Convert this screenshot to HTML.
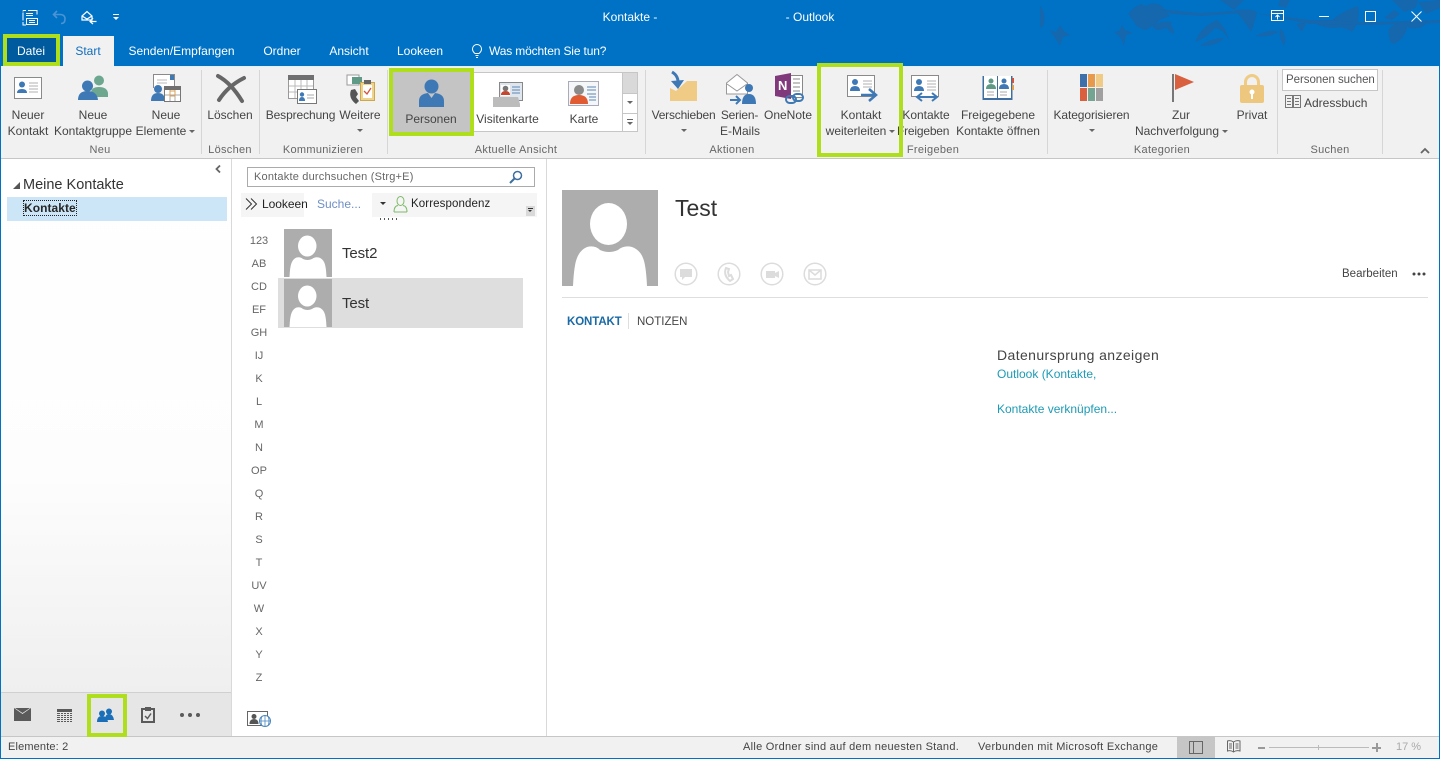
<!DOCTYPE html>
<html lang="de"><head><meta charset="utf-8"><title>Kontakte - Outlook</title>
<style>
html,body{margin:0;padding:0;width:1440px;height:759px;overflow:hidden;background:#fff}
body{position:relative;font-family:"Liberation Sans",sans-serif;font-size:12px;color:#444}
.a{position:absolute}
.t{position:absolute;white-space:nowrap;line-height:16px;font-size:12px;color:#444}
.c{transform:translateX(-50%)}
.g{position:absolute;box-sizing:border-box;border:4px solid #aede1c;z-index:5}
.s{position:absolute;width:1px;background:#d6d6d6}
.w{color:#fff}
.l{font-size:11px;color:#666;left:259px;transform:translateX(-50%);letter-spacing:0}
.m{color:#666;letter-spacing:.3px}
svg{position:absolute;overflow:visible}
</style></head><body>

<!-- title bar -->
<div class="a" style="left:0;top:0;width:1440px;height:66px;background:#0072c6"></div>
<svg style="left:1040px;top:0" width="400" height="66" fill="#1567ae">
<path d="M0 6q7 8 3 20L0 28zM10 30l6 2 4-7 4 6 6 4-7 2-3 9-5-8-3-4z"/>
<path d="M74 32l5-1 3-6 3 5 8 3-7 2-2 11-4-9z"/>
<path d="M88 14q6-8 14-10l4 2q10-6 18 2l6 8-10 4q-4 4-14 10-10-2-12-8zM112 26q10-6 20-4-4 8-16 8zM128 22q6 4 6 12-6-2-8-8z"/>
<path d="M120 9l40 4 50-3 6 2-54 4-30-2z"/>
<path d="M155 42q6-16 22-22 10 8 12 22-4-12-14-14-8 10-20 14zM195 10q16-2 22 2-2 10-6 20-6-10-16-22z"/>
<path d="M160 46q10-8 24-8-6 8-24 8zM240 28q8 8 4 18-6-8-4-18zM215 36q16-8 24-4-10 6-24 4zM256 24q8-2 10 0l-4 8z"/>
<path d="M270 20h22q12-10 26-14 2 12-2 20l-4 6q-8-6-18-4-14 0-24-8z"/>
<path d="M215 13l55 7 60 2 70-2v3l-70 2-60-1z"/>
<path d="M348 30q8-10 20-6-2 14-14 20l-4-2zM365 22q10-4 22 0-4 8-18 6zM352 0h26l-2 8-12 4zM378 2l22-2v8l-14 6zM180 0h24l-10 10zM240 0h10l-4 8-8-2zM344 18l10-8 6 4-8 6z"/>
</svg>

<!-- qat -->
<svg style="left:22px;top:10px" width="17" height="16" fill="none" stroke="#fff" stroke-width="1">
<path d="M1 .5h3M6 .5h9v4M1 2.500v8M1 .5v1M4 3.500h7M4 5.500h7M4.500 8.500h11v6h-11zM7 10.500h6M7 12.500h6M1 12v3h3"/></svg>
<svg style="left:52px;top:10px" width="15" height="14" fill="none" stroke="#4b93d3" stroke-width="1.600">
<path d="M5 1L1.500 4.500 5 8M2 4.500h6q5 0 5 4.500t-4 4.500"/></svg>
<svg style="left:81px;top:10px" width="16" height="16" fill="none" stroke="#fff" stroke-width="1.200">
<path d="M1 6l5-4.500L11 6v4H1zM1 6l5 3 5-3M12 8l-3 3.500 3 2.500M9.500 11.500h6" /></svg>
<div class="a" style="left:113px;top:14px;width:6px;height:1px;background:#fff"></div>
<div class="a" style="left:113px;top:17px;width:0;height:0;border-left:3px solid transparent;border-right:3px solid transparent;border-top:3px solid #fff"></div>

<div class="t w c" style="left:630px;top:9px">Kontakte -</div>
<div class="t w c" style="left:810px;top:9px">- Outlook</div>

<!-- window buttons -->
<svg style="left:1271px;top:10px" width="14" height="12" fill="none" stroke="#fff" stroke-width="1"><path d="M.5.500h12v10H.5zM.5 3.500h12M6.500 9.500v-4M4.500 7l2-2 2 2"/></svg>
<div class="a" style="left:1319px;top:16px;width:10px;height:1px;background:#fff"></div>
<div class="a" style="left:1365px;top:11px;width:9px;height:9px;border:1px solid #fff"></div>
<svg style="left:1411px;top:11px" width="11" height="11" stroke="#fff" stroke-width="1"><path d="M.5.500l10 10M10.500.500l-10 10"/></svg>

<!-- tabs -->
<div class="a" style="left:3px;top:34px;width:57px;height:32px;background:#005a9e"></div>
<div class="g" style="left:3px;top:34px;width:57px;height:32px"></div>
<div class="t w c" style="left:31px;top:43px;z-index:6">Datei</div>
<div class="a" style="left:63px;top:36px;width:51px;height:30px;background:#f1f1f1"></div>
<div class="t c" style="left:88px;top:43px;color:#106ebe">Start</div>
<div class="t w c" style="left:181.500px;top:43px">Senden/Empfangen</div>
<div class="t w c" style="left:282px;top:43px">Ordner</div>
<div class="t w c" style="left:349px;top:43px">Ansicht</div>
<div class="t w c" style="left:420px;top:43px">Lookeen</div>
<svg style="left:472px;top:44px" width="10" height="14" fill="none" stroke="#fff" stroke-width="1"><path d="M3 9.500Q.5 7.500.5 5a4.500 4.500 0 0 1 9 0Q9.500 7.500 7 9.500zM3.500 11.500h3M4 13.500h2"/></svg>
<div class="t w" style="left:489px;top:43px;letter-spacing:-.15px">Was möchten Sie tun?</div>

<!-- ribbon -->
<div class="a" style="left:1px;top:66px;width:1438px;height:92px;background:#f1f1f1;border-bottom:1px solid #c6c6c6"></div>
<div class="a" style="left:114px;top:66px;width:1325px;height:1px;background:#e2f0fa"></div>
<div class="s" style="left:201px;top:70px;height:84px"></div>
<div class="s" style="left:259px;top:70px;height:84px"></div>
<div class="s" style="left:387px;top:70px;height:84px"></div>
<div class="s" style="left:645px;top:70px;height:84px"></div>
<div class="s" style="left:1047px;top:70px;height:84px"></div>
<div class="s" style="left:1277px;top:70px;height:84px"></div>
<div class="s" style="left:1382px;top:70px;height:84px"></div>

<!-- Neuer Kontakt -->
<svg style="left:14px;top:77px" width="28" height="23"><rect x=".5" y=".5" width="27" height="21" fill="#fff" stroke="#8a8a8a"/><circle cx="8" cy="7.500" r="3" fill="#3f79b5"/><path d="M3 16q0-4 5-4t5 4z" fill="#3f79b5"/><path d="M15 6h9M15 9h9M15 12h9M15 15h9" stroke="#b0b0b0"/></svg>
<div class="t c" style="left:28px;top:107px">Neuer</div><div class="t c" style="left:28px;top:123px">Kontakt</div>
<!-- Gruppe -->
<svg style="left:77px;top:74px" width="32" height="28"><circle cx="22" cy="6.500" r="5" fill="#6ea78f"/><path d="M14 19q0-6 8-6t9 6v4H18z" fill="#6ea78f"/><circle cx="10.500" cy="12" r="5.500" fill="#3f79b5"/><path d="M1 26q0-9 9.500-9T21 26z" fill="#3f79b5"/></svg>
<div class="t c" style="left:93px;top:107px">Neue</div><div class="t c" style="left:93px;top:123px">Kontaktgruppe</div>
<!-- Neue Elemente -->
<svg style="left:151px;top:74px" width="30" height="29"><path d="M2.500 14V.5h21v12" fill="#fff" stroke="#8a8a8a"/><rect x="19" y="1" width="4" height="5" fill="#3f79b5"/><path d="M6 6h10M6 9h10" stroke="#bbb"/><circle cx="7" cy="15" r="4" fill="#3f79b5"/><path d="M0 27q0-8 7-8t7 8z" fill="#3f79b5"/><rect x="13.500" y="12.500" width="16" height="15" fill="#fff" stroke="#777"/><rect x="13" y="12" width="17" height="4" fill="#6f6f6f"/><path d="M19 16v11M24 16v11M14 21h15" stroke="#aaa"/><rect x="19" y="17" width="5" height="5" fill="none" stroke="#e0a050"/></svg>
<div class="t c" style="left:166px;top:107px">Neue</div><div class="t c" style="left:161px;top:123px">Elemente</div>
<div class="a" style="left:189px;top:130px;border:3px solid transparent;border-top-color:#666"></div>
<div class="t m c" style="left:100px;top:142px;font-size:11px">Neu</div>

<!-- Löschen -->
<svg style="left:216px;top:75px" width="30" height="27" stroke="#666" stroke-width="4" fill="none" stroke-linecap="round"><path d="M2 1q13 7 24 25M28 3Q12 11 3 25"/></svg>
<div class="t c" style="left:230px;top:107px">Löschen</div>
<div class="t m c" style="left:230px;top:142px;font-size:11px">Löschen</div>

<!-- Besprechung -->
<svg style="left:288px;top:75px" width="29" height="29"><rect x=".5" y=".5" width="25" height="23" fill="#fff" stroke="#999"/><rect width="26" height="5" fill="#6f6f6f"/><path d="M7 5v18M13 5v18M19 5v18M1 11h24M1 17h24" stroke="#bbb"/><rect x="9.500" y="14.500" width="19" height="14" fill="#fff" stroke="#777"/><circle cx="14" cy="19.500" r="2.200" fill="#3f79b5"/><path d="M11 26q0-4 3-4t3 4z" fill="#3f79b5"/><path d="M19 20h7M19 23h7" stroke="#aaa"/></svg>
<div class="t c" style="left:300.500px;top:107px;letter-spacing:-.1px">Besprechung</div>
<!-- Weitere -->
<svg style="left:346px;top:74px" width="29" height="31"><path d="M1 1h12v10H1z" fill="#fff" stroke="#999"/><rect x="6" y="3" width="10" height="7" fill="#5e9a85"/><path d="M5 16q-3 8 5 14l3-3-3-4 2-3-3-5z" fill="#555"/><rect x="14.500" y="8.500" width="14" height="18" fill="#efd28c" stroke="#c9a84f"/><rect x="17" y="11" width="9" height="13" fill="#fff"/><rect x="18" y="6" width="7" height="4" fill="#666"/><path d="M18 17l3 3 4-6" fill="none" stroke="#d3543c" stroke-width="1.300"/></svg>
<div class="t c" style="left:360px;top:107px">Weitere</div>
<div class="a" style="left:357px;top:129px;border:3px solid transparent;border-top-color:#666"></div>
<div class="t m c" style="left:323px;top:142px;font-size:11px">Kommunizieren</div>

<!-- Aktuelle Ansicht gallery -->
<div class="a" style="left:389px;top:72px;box-sizing:border-box;width:249px;height:60px;background:#fff;border:1px solid #c6c6c6"></div>
<div class="a" style="left:393px;top:72px;width:77px;height:60px;background:#c4c4c4"></div>
<div class="g" style="left:389px;top:68px;width:85px;height:68px"></div>
<svg style="left:419px;top:79px" width="25" height="29" fill="#3f79b5"><circle cx="12.500" cy="7.500" r="7"/><path d="M0 28v-6q0-7 9-8l3.500 5 3.500-5q9 1 9 8v6z"/></svg>
<div class="t c" style="left:431px;top:111px">Personen</div>
<svg style="left:492px;top:82px" width="32" height="26"><rect x="7.500" y=".5" width="23" height="18" fill="#dfe6ee" stroke="#888"/><rect x="9" y="3" width="9" height="11" fill="#fff"/><circle cx="13.500" cy="6.500" r="2.800" fill="#777"/><path d="M9 13q0-4 4.500-4t4.500 4z" fill="#c8442e"/><path d="M20 5h8M20 8h8M20 11h8" stroke="#5b87b4"/><path d="M1 15h25l2 7v3H1z" fill="#bcbcbc"/></svg>
<div class="t c" style="left:507.500px;top:111px">Visitenkarte</div>
<svg style="left:568px;top:81px" width="31" height="26"><rect x=".5" y=".5" width="30" height="24" fill="#f4f6f8" stroke="#aab"/><circle cx="11" cy="9" r="5" fill="#8a8a8a"/><path d="M2 23q0-9 9-9t9 9z" fill="#e05a32"/><path d="M19 6h9M19 9h9M19 13h9M21 16h7M21 19h7" stroke="#5b87b4"/></svg>
<div class="t c" style="left:584px;top:111px">Karte</div>
<div class="a" style="left:623px;top:73px;width:14px;height:20px;background:#d9d9d9"></div>
<div class="a" style="left:623px;top:93px;width:14px;height:1px;background:#c6c6c6"></div>
<div class="a" style="left:623px;top:113px;width:14px;height:1px;background:#c6c6c6"></div>
<div class="a" style="left:622px;top:73px;width:1px;height:58px;background:#c6c6c6"></div>
<div class="a" style="left:627px;top:101px;border:3px solid transparent;border-top-color:#666"></div>
<div class="a" style="left:627px;top:119px;width:6px;height:1px;background:#666"></div>
<div class="a" style="left:627px;top:122px;border:3px solid transparent;border-top-color:#666"></div>
<div class="t m c" style="left:516px;top:142px;font-size:11px">Aktuelle Ansicht</div>

<!-- Aktionen -->
<svg style="left:667px;top:71px" width="32" height="30"><path d="M3 17l6 3 11-10h10v20H3z" fill="#efcb85"/><path d="M5 1Q12 5 11 14" fill="none" stroke="#3f79b5" stroke-width="3"/><path d="M4 10l7 8 6-9z" fill="#3f79b5"/></svg>
<div class="t c" style="left:683.500px;top:107px;letter-spacing:-.2px">Verschieben</div>
<div class="a" style="left:681px;top:129px;border:3px solid transparent;border-top-color:#666"></div>
<svg style="left:725px;top:73px" width="32" height="32"><path d="M1.500 10L12 1.500 22.500 10v11h-21z" fill="#fff" stroke="#999"/><path d="M2 11l10 7 10-7" fill="none" stroke="#999"/><circle cx="24" cy="15" r="4" fill="#3f79b5"/><path d="M17 31q0-10 7-10t7 10z" fill="#3f79b5"/><path d="M5 27h9M11 23l4 4-4 4" fill="none" stroke="#3f79b5" stroke-width="2"/></svg>
<div class="t c" style="left:739.500px;top:107px;letter-spacing:-.2px">Serien-</div><div class="t c" style="left:740px;top:123px">E-Mails</div>
<svg style="left:775px;top:73px" width="29" height="32"><rect x="10.500" y="2.500" width="17" height="22" fill="#fff" stroke="#888"/><path d="M18 6h7M18 10h7M18 14h7M18 18h7" stroke="#888"/><path d="M0 3l16-3v26L0 23z" fill="#80397b"/><text x="3" y="17" font-size="13" font-weight="bold" fill="#fff" font-family="Liberation Sans">N</text><rect x="11" y="23" width="10" height="7" rx="3.500" fill="none" stroke="#3f79b5" stroke-width="2"/><rect x="18" y="21" width="10" height="7" rx="3.500" fill="none" stroke="#3f79b5" stroke-width="2"/></svg>
<div class="t c" style="left:788px;top:107px">OneNote</div>
<div class="t m c" style="left:732px;top:142px;font-size:11px">Aktionen</div>

<!-- Freigeben -->
<div class="g" style="left:817px;top:63px;width:86px;height:94px"></div>
<svg style="left:847px;top:75px" width="31" height="28"><rect x=".5" y=".5" width="27" height="21" fill="#fff" stroke="#8a8a8a"/><circle cx="8" cy="7" r="3" fill="#3f79b5"/><path d="M3 16q0-5 5-5t5 5z" fill="#3f79b5"/><path d="M16 6h9M16 9h9M16 12h9" stroke="#b0b0b0"/><path d="M14 20h14M22 14l7 6-7 6" fill="none" stroke="#3f79b5" stroke-width="2.500"/></svg>
<div class="t c" style="left:861px;top:107px">Kontakt</div><div class="t c" style="left:856px;top:123px">weiterleiten</div>
<div class="a" style="left:889px;top:130px;border:3px solid transparent;border-top-color:#666"></div>
<svg style="left:911px;top:75px" width="31" height="28"><rect x=".5" y=".5" width="27" height="21" fill="#fff" stroke="#8a8a8a"/><circle cx="8" cy="7" r="3" fill="#3f79b5"/><path d="M3 16q0-5 5-5t5 5z" fill="#3f79b5"/><path d="M16 6h9M16 9h9M16 12h9M16 15h9" stroke="#b0b0b0"/><path d="M6 22h20M11 18l-5 4 5 4M21 18l5 4-5 4" fill="none" stroke="#3f79b5" stroke-width="2"/></svg>
<div class="t c" style="left:926px;top:107px">Kontakte</div>
<div class="t" style="left:897px;top:123px;letter-spacing:-.2px">Freigeben</div>
<div class="t m c" style="left:933px;top:142px;font-size:11px">Freigeben</div>
<svg style="left:982px;top:75px" width="32" height="27"><path d="M.5 1h30v24H.5z" fill="#3f6f9f"/><rect x="2" y="1" width="13" height="22" fill="#fff"/><rect x="16" y="1" width="13" height="22" fill="#fff"/><circle cx="9" cy="6" r="2.500" fill="#5e9a85"/><path d="M4 14q0-5 5-5t5 5z" fill="#5e9a85"/><circle cx="22" cy="6" r="2.500" fill="#3f79b5"/><path d="M17 14q0-5 5-5t5 5z" fill="#3f79b5"/><path d="M5 17h7M5 20h7M18 17h7M18 20h7" stroke="#aaa"/><rect x="30" y="3" width="2" height="5" fill="#d3543c"/><rect x="30" y="10" width="2" height="5" fill="#e0a050"/></svg>
<div class="t c" style="left:998px;top:107px">Freigegebene</div><div class="t c" style="left:998px;top:123px">Kontakte öffnen</div>

<!-- Kategorien -->
<svg style="left:1080px;top:74px" width="23" height="27"><rect width="7" height="13" fill="#3f6fa8"/><rect x="8" width="7" height="13" fill="#e89a4c"/><rect x="16" width="7" height="13" fill="#efcb85"/><rect y="14" width="7" height="13" fill="#d9603f"/><rect x="8" y="14" width="7" height="13" fill="#74a592"/><rect x="16" y="14" width="7" height="13" fill="#a0a0a0"/></svg>
<div class="t c" style="left:1091.500px;top:107px;letter-spacing:-.1px">Kategorisieren</div>
<div class="a" style="left:1089px;top:129px;border:3px solid transparent;border-top-color:#666"></div>
<svg style="left:1172px;top:74px" width="22" height="28"><rect width="2" height="28" fill="#777"/><path d="M3 0l19 8-19 8z" fill="#d9603f"/></svg>
<div class="t c" style="left:1181px;top:107px">Zur</div><div class="t c" style="left:1177px;top:123px">Nachverfolgung</div>
<div class="a" style="left:1222px;top:130px;border:3px solid transparent;border-top-color:#666"></div>
<svg style="left:1240px;top:74px" width="24" height="29"><path d="M5.500 13V8a6.500 6.500 0 0 1 13 0v5" fill="none" stroke="#efcb85" stroke-width="3"/><rect y="11" width="24" height="18" rx="2" fill="#eec77e"/><circle cx="12" cy="18" r="2.500" fill="#fff"/><rect x="11" y="19" width="2" height="6" fill="#fff"/></svg>
<div class="t c" style="left:1252px;top:107px">Privat</div>
<div class="t m c" style="left:1162px;top:142px;font-size:11px">Kategorien</div>

<!-- Suchen -->
<div class="a" style="left:1282px;top:69px;box-sizing:border-box;width:96px;height:22px;background:#fff;border:1px solid #c6c6c6"></div>
<div class="t" style="left:1286px;top:72px;color:#555;font-size:11.500px;letter-spacing:-.05px">Personen suchen</div>
<svg style="left:1285px;top:95px" width="16" height="13" fill="none" stroke="#777"><path d="M.5.500h7v12h-7zM8.500.500h7v12h-7zM2 3.500h4M2 6.500h4M2 9.500h4M10 3.500h4M10 6.500h4M10 9.500h4"/></svg>
<div class="t" style="left:1304px;top:95px">Adressbuch</div>
<div class="t m c" style="left:1330px;top:142px;font-size:11px">Suchen</div>
<svg style="left:1420px;top:147px" width="10" height="7" fill="none" stroke="#666" stroke-width="1.800"><path d="M1 6l4-4 4 4"/></svg>

<!-- left pane -->
<div class="a" style="left:1px;top:159px;width:230px;height:533px;background:linear-gradient(#fff 0,#fdfdfd 60%,#efefef 100%)"></div>
<div class="a" style="left:231px;top:159px;width:1px;height:578px;background:#d9d9d9"></div>
<svg style="left:215px;top:165px" width="6" height="8" fill="none" stroke="#666" stroke-width="1.800"><path d="M5 .5L1.500 4 5 7.500"/></svg>
<div class="a" style="left:13px;top:182px;width:0;height:0;border-left:7px solid transparent;border-bottom:7px solid #555"></div>
<div class="t" style="left:23px;top:177px;font-size:14.500px;line-height:16px;color:#333">Meine Kontakte</div>
<div class="a" style="left:7px;top:197px;width:220px;height:24px;background:#cde6f7"></div>
<div class="t" style="left:24px;top:201px;font-weight:bold;color:#262626;font-size:12px;outline:1px dotted #222;line-height:14px;letter-spacing:.05px">Kontakte</div>

<!-- nav -->
<div class="a" style="left:1px;top:692px;width:230px;height:45px;background:#e6e6e6;border-top:1px solid #d0d0d0;box-sizing:border-box"></div>
<svg style="left:14px;top:708px" width="17" height="13"><path d="M0 0l8.500 6L17 0v13H0z" fill="#5a5a5a"/><path d="M1 0h15L8.500 5z" fill="#5a5a5a"/></svg>
<svg style="left:57px;top:709px" width="15" height="13" fill="#5a5a5a"><rect width="15" height="3"/><path d="M0 4h15v1H0zM0 6h15v1H0zM0 8h15v1H0zM0 10h15v1H0zM0 12h15v1H0z"/><path d="M3 3h1v10H3zM6 3h1v10H6zM9 3h1v10H9zM12 3h1v10h-1z" fill="#e6e6e6"/></svg>
<div class="g" style="left:87px;top:694px;width:40px;height:43px"></div>
<svg style="left:97px;top:708px" width="17" height="14" fill="#1b6fb8"><circle cx="12" cy="3.500" r="3"/><path d="M8 12q0-6 4-6t5 6z"/><circle cx="5" cy="5.500" r="3"/><path d="M0 14q0-6 5-6t6 6z"/></svg>
<svg style="left:141px;top:707px" width="14" height="16"><rect x="1" y="2" width="12" height="13" fill="none" stroke="#5a5a5a" stroke-width="2"/><rect x="4" y="0" width="6" height="4" fill="#5a5a5a"/><path d="M4 9l2.500 2.500L10 6.500" fill="none" stroke="#5a5a5a" stroke-width="1.500"/></svg>
<svg style="left:180px;top:713px" width="21" height="4" fill="#5a5a5a"><circle cx="2" cy="2" r="2"/><circle cx="10" cy="2" r="2"/><circle cx="18" cy="2" r="2"/></svg>

<!-- middle -->
<div class="a" style="left:546px;top:159px;width:1px;height:578px;background:#d9d9d9"></div>
<div class="a" style="left:247px;top:167px;box-sizing:border-box;width:288px;height:20px;border:1px solid #ababab;background:#fff"></div>
<div class="t" style="left:254px;top:169px;font-size:11px;color:#666;letter-spacing:.2px">Kontakte durchsuchen (Strg+E)</div>
<svg style="left:509px;top:170px" width="14" height="14" fill="none" stroke="#3f6f9f" stroke-width="1.500"><circle cx="8.500" cy="5.500" r="4"/><path d="M5.500 8.500L1 13" stroke-width="2"/></svg>
<div class="a" style="left:241px;top:193px;width:296px;height:24px;background:#f5f5f5"></div>
<div class="a" style="left:304px;top:193px;width:68px;height:24px;background:#fff"></div>
<svg style="left:245px;top:198px" width="14" height="12" fill="none" stroke="#333" stroke-width="1"><path d="M1 .5L6.500 6 1 11.500M6 .5L11.500 6 6 11.500"/></svg>
<div class="t" style="left:262px;top:196px;color:#222;letter-spacing:-.05px">Lookeen</div>
<div class="t" style="left:317px;top:196px;color:#6f8fc4">Suche...</div>
<div class="a" style="left:380px;top:202px;border:3px solid transparent;border-top-color:#333"></div>
<svg style="left:393px;top:196px" width="15" height="17" fill="none" stroke="#7fba6a"><ellipse cx="7.500" cy="5" rx="3.500" ry="4.500"/><path d="M1 16q0-6 4-6.500M14 16q0-6-4-6.500M1 16h13"/></svg>
<div class="t" style="left:411px;top:196px;color:#222;font-size:11.500px;letter-spacing:.1px">Korrespondenz</div>
<div class="a" style="left:526px;top:206px;width:9px;height:10px;background:#d9d9d9"></div>
<div class="a" style="left:528px;top:208px;width:5px;height:1px;background:#333"></div>
<div class="a" style="left:528px;top:210px;border:2.500px solid transparent;border-top-color:#333"></div>
<div class="a" style="left:380px;top:218px;width:19px;height:2px;background:repeating-linear-gradient(90deg,#555 0 1px,transparent 1px 4px)"></div>

<div class="t l" style="top:233px">123</div><div class="t l" style="top:256px">AB</div><div class="t l" style="top:279px">CD</div><div class="t l" style="top:302px">EF</div><div class="t l" style="top:325px">GH</div><div class="t l" style="top:348px">IJ</div><div class="t l" style="top:371px">K</div><div class="t l" style="top:394px">L</div><div class="t l" style="top:417px">M</div><div class="t l" style="top:440px">N</div><div class="t l" style="top:463px">OP</div><div class="t l" style="top:486px">Q</div><div class="t l" style="top:509px">R</div><div class="t l" style="top:532px">S</div><div class="t l" style="top:555px">T</div><div class="t l" style="top:578px">UV</div><div class="t l" style="top:601px">W</div><div class="t l" style="top:624px">X</div><div class="t l" style="top:647px">Y</div><div class="t l" style="top:670px">Z</div>

<div class="a" style="left:278px;top:278px;width:245px;height:50px;background:#dedede"></div>
<svg style="left:284px;top:229px" width="48" height="48" viewBox="0 0 96 96"><rect width="96" height="96" fill="#adadad"/><ellipse cx="46.500" cy="34" rx="18.500" ry="21" fill="#fff"/><path d="M11 96Q12 75 15 68 18 60 25 57 33 55 38 60 47 64 56 60 62 55 70 57 78 60 81 68 84 75 85 96z" fill="#fff"/></svg>
<svg style="left:284px;top:279px" width="48" height="48" viewBox="0 0 96 96"><rect width="96" height="96" fill="#adadad"/><ellipse cx="46.500" cy="34" rx="18.500" ry="21" fill="#fff"/><path d="M11 96Q12 75 15 68 18 60 25 57 33 55 38 60 47 64 56 60 62 55 70 57 78 60 81 68 84 75 85 96z" fill="#fff"/></svg>
<div class="t" style="left:342px;top:246px;font-size:15px;color:#333;letter-spacing:-.1px">Test2</div>
<div class="t" style="left:342px;top:296px;font-size:15px;color:#333;letter-spacing:-.1px">Test</div>
<svg style="left:247px;top:711px" width="25" height="17"><rect x=".5" y=".5" width="20" height="14" fill="#fff" stroke="#666"/><circle cx="7" cy="5.500" r="2.500" fill="#555"/><path d="M2.500 13q0-5 4.500-5t4.500 5z" fill="#555"/><circle cx="18" cy="10" r="5.500" fill="#fff" stroke="#4a86c0"/><path d="M12.500 10h11M18 4.500v11M15 5q-2 5 0 10M21 5q2 5 0 10" fill="none" stroke="#4a86c0" stroke-width=".8"/></svg>

<!-- reading pane -->
<svg style="left:562px;top:190px" width="96" height="96"><rect width="96" height="96" fill="#adadad"/><ellipse cx="46.500" cy="34" rx="18.500" ry="21" fill="#fff"/><path d="M11 96Q12 75 15 68 18 60 25 57 33 55 38 60 47 64 56 60 62 55 70 57 78 60 81 68 84 75 85 96z" fill="#fff"/></svg>
<div class="t" style="left:675px;top:196px;font-size:23px;line-height:24px;color:#333">Test</div>
<svg style="left:674px;top:262px" width="153" height="24" fill="none" stroke="#dcdcdc" stroke-width="1.500"><circle cx="12" cy="12" r="10.800"/><circle cx="55" cy="12" r="10.800"/><circle cx="98" cy="12" r="10.800"/><circle cx="141" cy="12" r="10.800"/><path d="M6 7h12v8h-7l-3 3v-3H6z" fill="#dcdcdc" stroke="none"/><path d="M52 6q-3 7 4 13l3-2-2-4-2 1-1-4 1-3z" fill="none" stroke-width="2"/><path d="M92 9h9v7h-9zM101 11l4-2v7l-4-2z" fill="#dcdcdc" stroke="none"/><path d="M135 8h12v9h-12zM135 8l6 5 6-5" stroke-width="1.500"/></svg>
<div class="t" style="left:1342px;top:266px;font-size:11.500px;color:#444">Bearbeiten</div>
<svg style="left:1412px;top:272px" width="14" height="4" fill="#444"><circle cx="2" cy="2" r="1.500"/><circle cx="7" cy="2" r="1.500"/><circle cx="12" cy="2" r="1.500"/></svg>
<div class="a" style="left:562px;top:297px;width:866px;height:1px;background:#dedede"></div>
<div class="t" style="left:567px;top:314px;font-weight:bold;color:#1a6aa5;font-size:11.500px;letter-spacing:-.1px">KONTAKT</div>
<div class="a" style="left:628px;top:313px;width:1px;height:16px;background:#dedede"></div>
<div class="t" style="left:637px;top:314px;color:#444;font-size:11.500px">NOTIZEN</div>
<div class="t" style="left:997px;top:347px;font-size:14px;color:#444;letter-spacing:.4px">Datenursprung anzeigen</div>
<div class="t" style="left:997px;top:366px;font-size:12px;color:#1d9bb5">Outlook (Kontakte,</div>
<div class="t" style="left:997px;top:401px;font-size:12px;color:#1d9bb5">Kontakte verknüpfen...</div>

<!-- status bar -->
<div class="a" style="left:1px;top:736px;width:1438px;height:22px;background:#f1f1f1;border-top:1px solid #c6c6c6;box-sizing:border-box"></div>
<div class="t" style="left:8px;top:739px;font-size:11px;color:#444;letter-spacing:.15px">Elemente: 2</div>
<div class="t" style="left:743px;top:739px;font-size:11px;color:#444;letter-spacing:.28px">Alle Ordner sind auf dem neuesten Stand.</div>
<div class="t" style="left:978px;top:739px;font-size:11px;color:#444;letter-spacing:.3px">Verbunden mit Microsoft Exchange</div>
<div class="a" style="left:1177px;top:737px;width:38px;height:21px;background:#c6c6c6"></div>
<svg style="left:1189px;top:741px" width="14" height="13" fill="none" stroke="#666"><path d="M.5.500h13v12H.5zM4.500.500v12"/></svg>
<svg style="left:1227px;top:740px" width="14" height="13" fill="none" stroke="#666"><path d="M.5 1q3-1 6 1 3-2 6.500-1v10q-3.500-1-6.500 1-3-2-6-1zM6.500 2v10M2 4h3M2 6h3M2 8h3M8.500 4h3M8.500 6h3M8.500 8h3"/></svg>
<div class="a" style="left:1258px;top:747px;width:7px;height:2px;background:#999"></div>
<div class="a" style="left:1269px;top:747px;width:100px;height:1px;background:#bbb"></div>
<div class="a" style="left:1318px;top:745px;width:1px;height:5px;background:#bbb"></div>
<div class="a" style="left:1372px;top:747px;width:9px;height:2px;background:#999"></div>
<div class="a" style="left:1375.500px;top:743px;width:2px;height:9px;background:#999"></div>
<div class="t" style="left:1396px;top:739px;font-size:11px;color:#aaa">17 %</div>

<!-- window frame -->
<div class="a" style="left:0;top:66px;width:1px;height:693px;background:#0072c6"></div>
<div class="a" style="left:1439px;top:66px;width:1px;height:693px;background:#0072c6"></div>
<div class="a" style="left:0;top:758px;width:1440px;height:1px;background:#0072c6"></div>
</body></html>
